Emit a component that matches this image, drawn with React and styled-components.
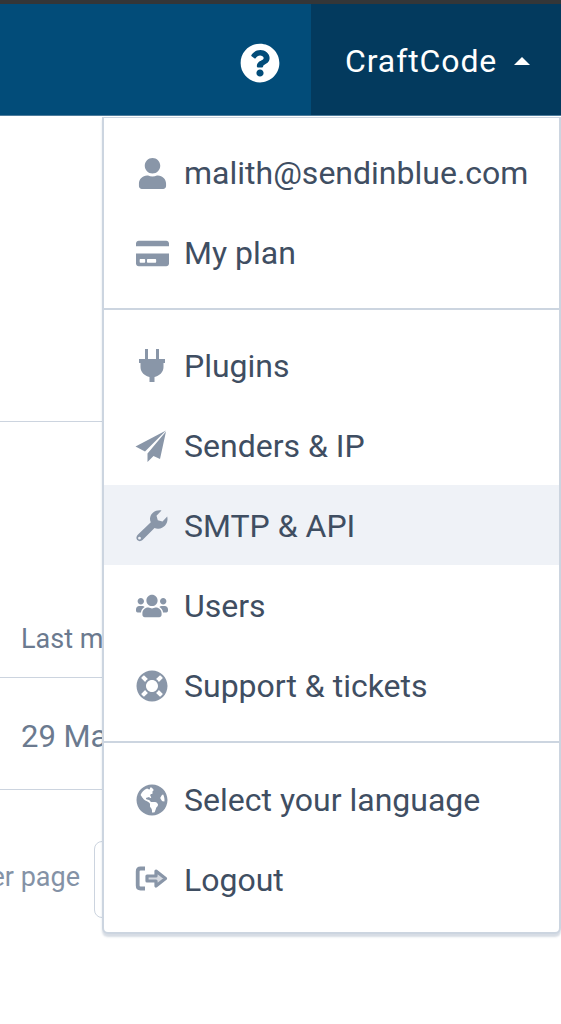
import React from 'react';
import styled, { createGlobalStyle } from 'styled-components';
import {
  FaUser,
  FaCreditCard,
  FaUsers,
  FaLifeRing,
  FaGlobeAmericas,
  FaQuestionCircle,
} from 'react-icons/fa';

const GlobalStyle = createGlobalStyle`
  html, body {
    margin: 0;
    padding: 0;
    background: #fff;
    font-family: 'Roboto', 'Liberation Sans', sans-serif;
  }
`;

const Page = styled.div`
  position: relative;
  width: 561px;
  height: 1024px;
  overflow: hidden;
  background: #fff;
`;

const TopStrip = styled.div`
  height: 4px;
  background: #343638;
`;

const Navbar = styled.header`
  display: flex;
  justify-content: flex-end;
  height: 112px;
  background: #024c79;
  border-bottom: 1px solid #4d7c9c;
  box-sizing: border-box;
`;

const HelpButton = styled.div`
  display: flex;
  align-items: center;
  justify-content: center;
  width: 98px;
  padding: 6px 4px 0 0;
  box-sizing: border-box;
  color: #fff;
  font-size: 40px;
`;

const AccountButton = styled.div`
  display: flex;
  align-items: center;
  width: 250px;
  padding: 2px 0 0 34px;
  box-sizing: border-box;
  background: #033a5e;
  color: #fff;
  font-size: 32px;
  letter-spacing: 0.9px;
`;

const Caret = styled.span`
  width: 0;
  height: 0;
  margin: 0 0 0 17px;
  border-left: 8px solid transparent;
  border-right: 8px solid transparent;
  border-bottom: 8px solid #fff;
`;

const Table = styled.div`
  padding-top: 305px;
  color: #6b7a8f;
  font-size: 27px;
`;

const Row = styled.div`
  display: flex;
  align-items: center;
  height: ${(p) => p.$height}px;
  padding: ${(p) => p.$pad || '0 0 0 21px'};
  font-size: ${(p) => p.$size || 27}px;
  border-top: 1px solid #ccd4df;
  box-sizing: border-box;
  white-space: nowrap;
`;

const Pager = styled.div`
  display: flex;
  align-items: center;
  justify-content: flex-end;
  width: 180px;
  margin-top: 51px;
  height: 77px;
  color: #8492a6;
  font-size: 27px;
`;

const PagerLabel = styled.span`
  margin: 0 14px 6px 0;
  white-space: nowrap;
`;

const PagerSelect = styled.div`
  flex: none;
  width: 86px;
  height: 77px;
  border: 1px solid #ccd4df;
  border-radius: 8px;
  box-sizing: border-box;
`;

const Dropdown = styled.nav`
  position: absolute;
  top: 117px;
  left: 102px;
  width: 459px;
  height: 817px;
  box-sizing: border-box;
  background: #fff;
  border: 2px solid #ccd5e0;
  border-top-width: 1px;
  border-radius: 0 0 6px 6px;
  box-shadow: 0 3px 2px rgba(120, 140, 165, 0.3);
`;

const Group = styled.div`
  padding: ${(p) => p.$top}px 0 ${(p) => p.$bottom}px;
  & + & {
    border-top: 2px solid #ccd5e0;
  }
`;

const Item = styled.div`
  display: flex;
  align-items: center;
  height: 80px;
  padding: 2px 0 0 31px;
  box-sizing: border-box;
  background: ${(p) => (p.$active ? '#eff2f7' : 'transparent')};
  color: #3f4e62;
  font-size: 32px;
  white-space: nowrap;
`;

const IconBox = styled.span`
  display: flex;
  align-items: center;
  justify-content: center;
  flex: none;
  width: 34px;
  margin-right: 15px;
  color: #8996a8;
  font-size: ${(p) => p.$size || 32}px;

  svg {
    overflow: visible;
  }
`;

const PlugIcon = () => (
  <svg width="32" height="32" viewBox="8 6 32 32" fill="currentColor">
    <path d="M17 5h3v10h-3zM28 5h3v10h-3zM11 15h26v4H11z" />
    <path d="M12.500 19h23v4c0 5.500-4.500 9-9 10v5h-5v-5c-4.500-1-9-4.500-9-10z" />
  </svg>
);

const PlaneIcon = () => (
  <svg width="32" height="32" viewBox="8 6 32 32" fill="currentColor">
    <path d="M38 6.500 7.500 22.500l9.500 5z" />
    <path d="M38 7.500 19.500 29.500V38l6-6 6.500 3z" />
  </svg>
);

const WrenchIcon = () => (
  <svg width="32" height="32" viewBox="8 6 32 32" fill="currentColor">
    <path
      fillRule="evenodd"
      d="M33.500 6.500C28 5.500 22.500 9 22 14.500c0 1.500.2 2.500.8 3.700L10 30.500c-2 2-2 4-.8 5.500 1.500 1.600 3.800 1.400 5.300 0l12-12c1.200.6 2.500.9 4 .8 5.200-.5 9-4.500 9-9.500 0-1-.1-2-.3-2.800L34.500 17.500l-4.700-1.300-1.300-4.500zM11.500 32.800a1.400 1.400 0 1 1 0 2.800 1.400 1.400 0 0 1 0-2.800z"
    />
  </svg>
);

const LogoutIcon = () => (
  <svg
    width="32"
    height="32"
    viewBox="8 7 32 32"
    fill="none"
    stroke="currentColor"
    strokeWidth="3.800"
    strokeLinejoin="round"
  >
    <path d="M17 11.500h-4.500c-1.800 0-2.800 1.200-2.800 3v14c0 1.800 1 3 2.800 3H17" />
    <path strokeWidth="3.200" fill="currentColor" fillOpacity="0.35" d="M19 19h9v-5l9.500 7.500L28 29v-5h-9z" />
  </svg>
);

const groups = [
  {
    top: 14,
    bottom: 16,
    items: [
      { icon: FaUser, size: 31, label: 'malith@sendinblue.com' },
      { icon: FaCreditCard, size: 33, label: 'My plan' },
    ],
  },
  {
    top: 15,
    bottom: 16,
    items: [
      { icon: PlugIcon, label: 'Plugins' },
      { icon: PlaneIcon, label: 'Senders & IP' },
      { icon: WrenchIcon, label: 'SMTP & API', active: true },
      { icon: FaUsers, size: 32, label: 'Users' },
      { icon: FaLifeRing, size: 32, label: 'Support & tickets' },
    ],
  },
  {
    top: 16,
    bottom: 13,
    items: [
      { icon: FaGlobeAmericas, size: 32, label: 'Select your language' },
      { icon: LogoutIcon, label: 'Logout' },
    ],
  },
];

export default function App() {
  return (
    <Page>
      <GlobalStyle />
      <TopStrip />
      <Navbar>
        <HelpButton>
          <FaQuestionCircle />
        </HelpButton>
        <AccountButton>
          CraftCode
          <Caret />
        </AccountButton>
      </Navbar>

      <Table>
        <Row $height={256} $pad="178px 0 0 21px">Last modified</Row>
        <Row $height={112} $size={31} $pad="6px 0 0 21px">29 March</Row>
        <Row $height={1} $pad="0" />
      </Table>
      <Pager>
        <PagerLabel>Rows per page</PagerLabel>
        <PagerSelect />
      </Pager>

      <Dropdown>
        {groups.map((group, g) => (
          <Group key={g} $top={group.top} $bottom={group.bottom}>
            {group.items.map(({ icon: Icon, size, label, active }) => (
              <Item key={label} $active={active}>
                <IconBox $size={size}>
                  <Icon />
                </IconBox>
                {label}
              </Item>
            ))}
          </Group>
        ))}
      </Dropdown>
    </Page>
  );
}
